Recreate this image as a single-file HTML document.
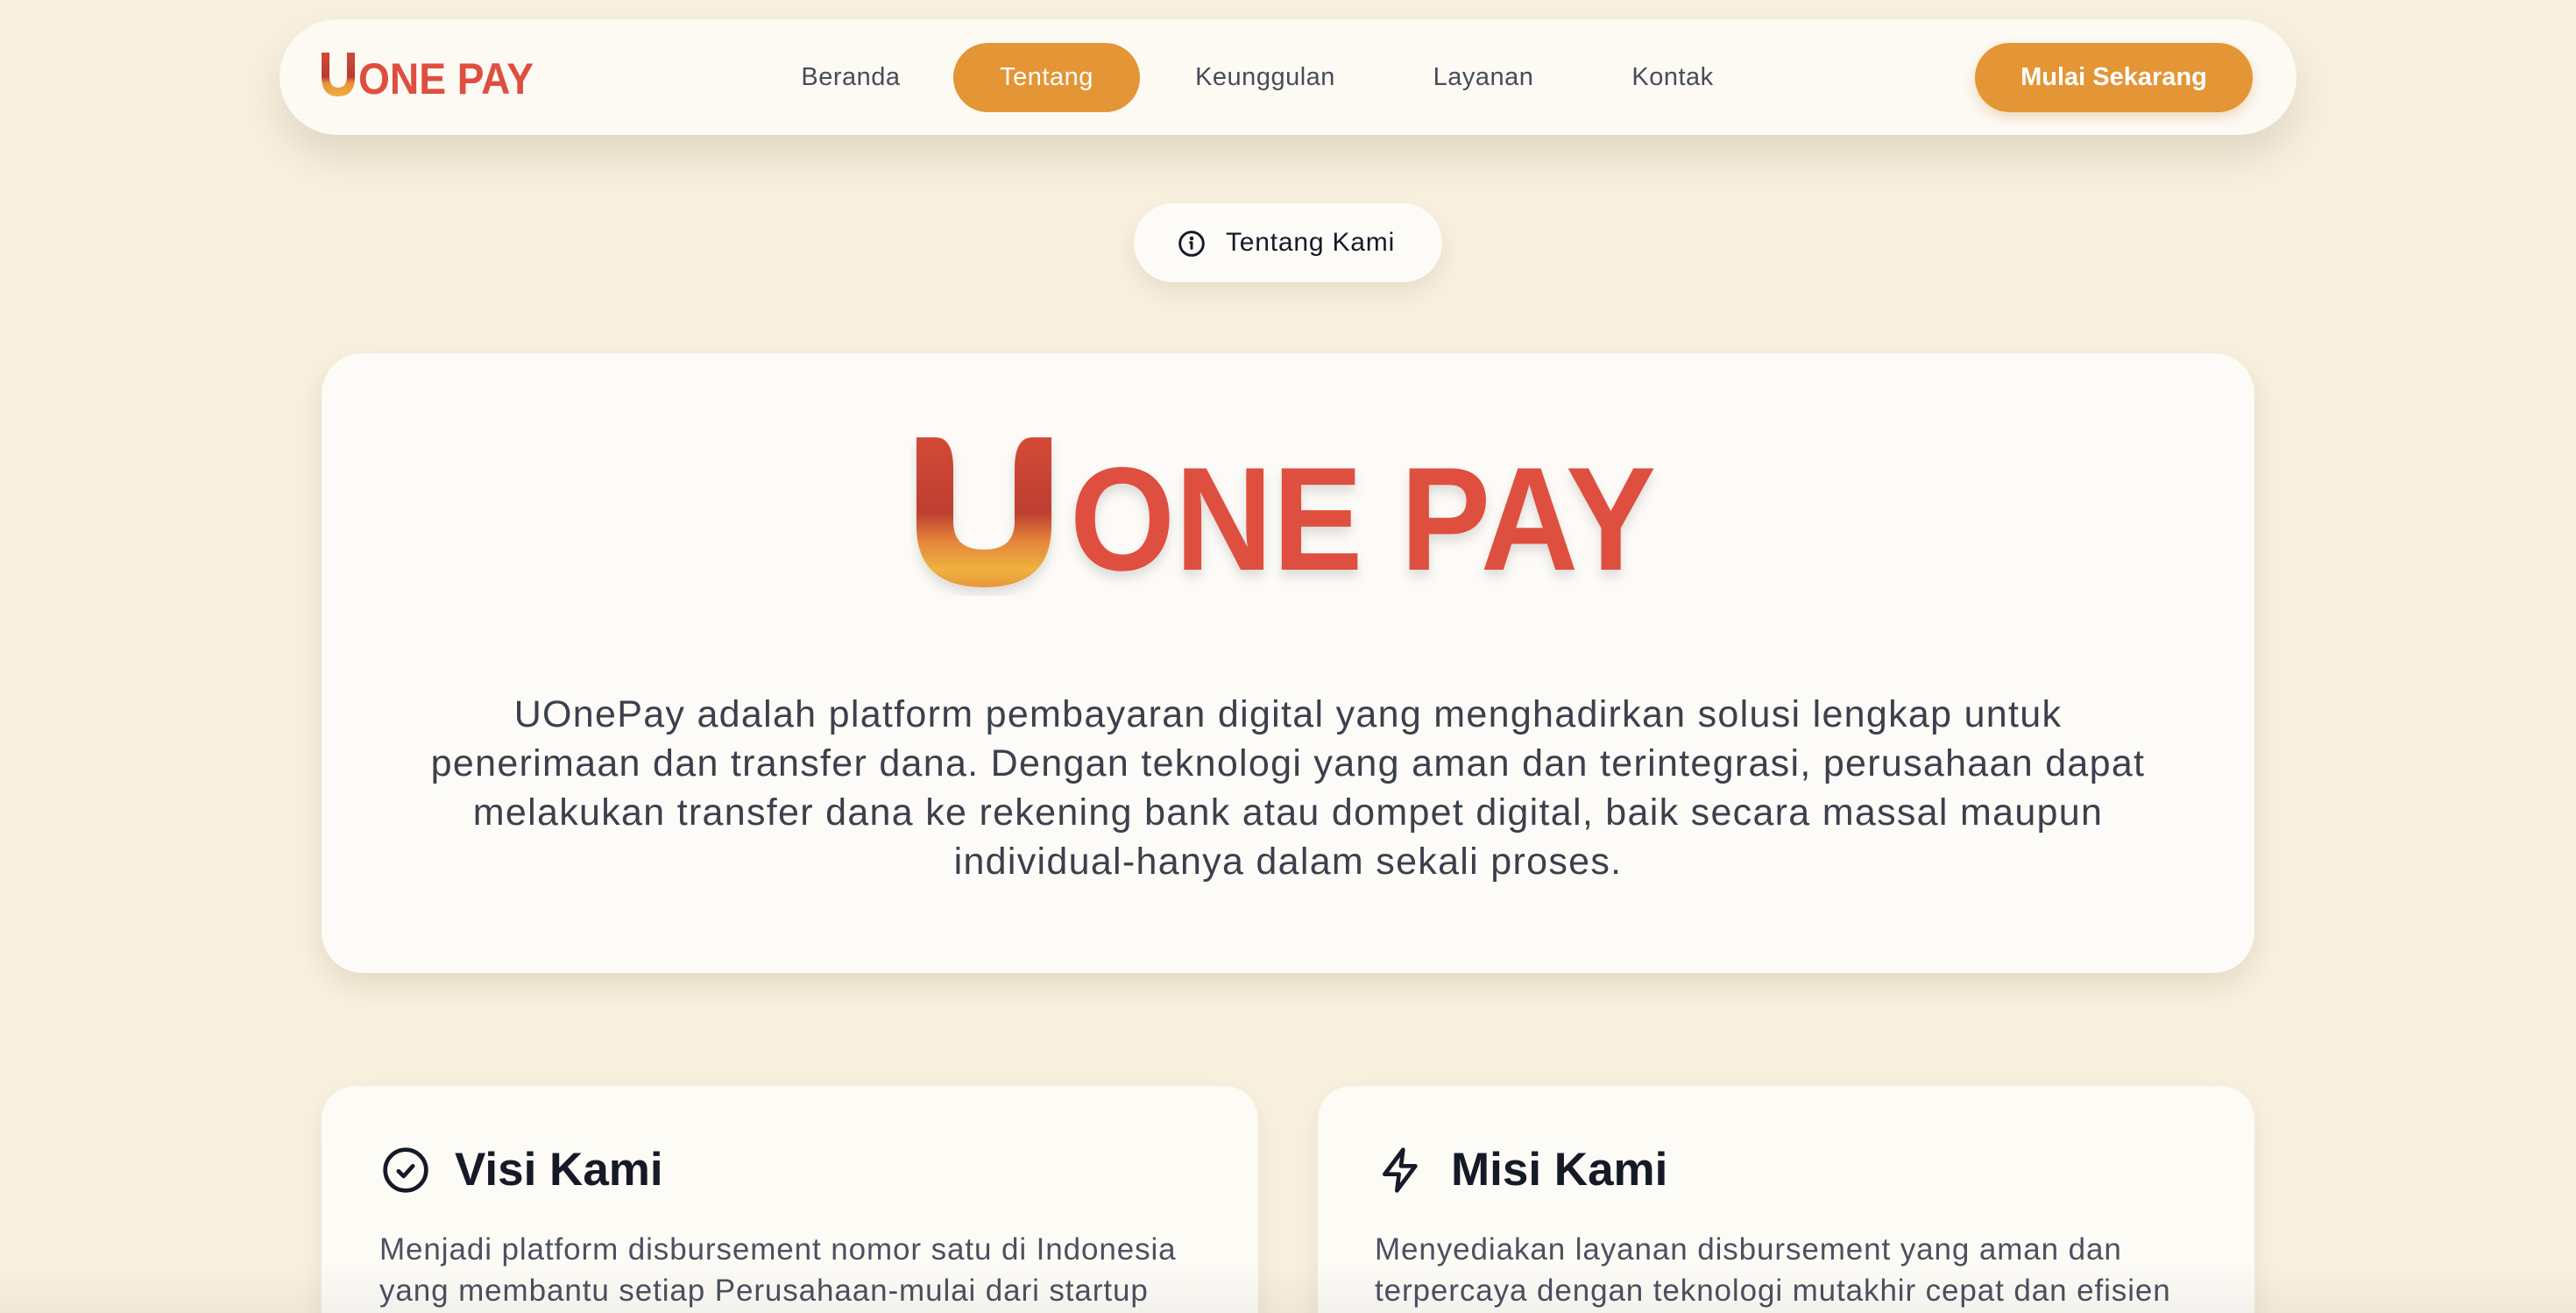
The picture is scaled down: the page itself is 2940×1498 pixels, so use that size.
<!DOCTYPE html>
<html><head><meta charset="utf-8">
<style>
*{margin:0;padding:0;box-sizing:border-box}
html,body{width:2940px;height:1498px;overflow:hidden;background:#f9f1e0;font-family:"Liberation Sans",sans-serif}
#wrap{position:relative;width:2940px;height:1498px;overflow:hidden}
.nav{position:absolute;left:319px;top:22px;width:2302px;height:132px;border-radius:66px;background:#fdfaf4;box-shadow:0 24px 50px rgba(90,70,30,.16)}
.link{position:absolute;top:49px;height:79px;line-height:79px;font-size:29px;color:#474c58;transform:translateX(-50%);white-space:nowrap;letter-spacing:.5px}
.pill{position:absolute;left:1088px;top:49px;width:213px;height:79px;border-radius:40px;background:#e49535;color:#fff;font-size:29px;line-height:79px;text-align:center;letter-spacing:.5px}
.btn{position:absolute;left:2254px;top:49px;width:317px;height:79px;border-radius:40px;background:#e49535;color:#fff;font-size:29px;font-weight:bold;line-height:79px;text-align:center;box-shadow:0 6px 14px rgba(200,120,30,.25)}
.tag{position:absolute;left:1294px;top:232px;width:352px;height:90px;border-radius:45px;background:#fdfbf7;box-shadow:0 12px 30px rgba(90,70,30,.12)}
.card{position:absolute;left:367px;top:403px;width:2206px;height:707px;border-radius:47px;background:#fdfbf7;box-shadow:0 14px 36px rgba(90,70,30,.14)}
.para{position:absolute;left:367px;top:787px;width:2206px;text-align:center;font-size:43px;line-height:56px;color:#3b404c;letter-spacing:1.3px}
.sc{position:absolute;top:1239px;width:1069px;height:300px;border-radius:38px;background:#fdfbf6;box-shadow:0 10px 30px rgba(90,70,30,.10)}
.st{position:absolute;top:1303px;font-size:53px;font-weight:bold;color:#161a27;line-height:64px}
.sb{position:absolute;top:1402px;font-size:35px;line-height:47px;color:#4b5160;white-space:nowrap;letter-spacing:.9px}
</style></head><body><div id="wrap">
<div class="nav"></div>
<svg style="position:absolute;left:365px;top:56px" width="250" height="56" viewBox="0 0 250 56">
<defs><linearGradient id="g1" x1="0" y1="0" x2="0" y2="1"><stop offset="0" stop-color="#d24a36"/><stop offset=".55" stop-color="#b93b30"/><stop offset=".7" stop-color="#e8913a"/><stop offset="1" stop-color="#eeae3e"/></linearGradient></defs>
<path d="M2 4 H11 V30 Q11 44 21 44 Q31 44 31 30 V4 H40 V32 Q40 54 21 54 Q2 54 2 32 Z" fill="url(#g1)"/>
<text x="44" y="51" font-family="Liberation Sans" font-weight="bold" font-size="50" fill="#de4f40" textLength="200" lengthAdjust="spacingAndGlyphs">ONE PAY</text>
</svg>
<div class="link" style="left:971px">Beranda</div>
<div class="pill">Tentang</div>
<div class="link" style="left:1444px">Keunggulan</div>
<div class="link" style="left:1693px">Layanan</div>
<div class="link" style="left:1909px">Kontak</div>
<div class="btn">Mulai Sekarang</div>

<div class="tag">
<svg style="position:absolute;left:50px;top:30px" width="32" height="32" viewBox="0 0 24 24" fill="none" stroke="#161a27" stroke-width="2.2" stroke-linecap="round"><circle cx="12" cy="12" r="10"/><path d="M12 16v-5M11 11h1"/><circle cx="12" cy="7.5" r=".6" fill="#161a27"/></svg>
<div style="position:absolute;left:105px;top:0;line-height:90px;font-size:30px;color:#161a27;letter-spacing:.8px">Tentang Kami</div>
</div>

<div class="card"></div>
<svg style="position:absolute;left:1040px;top:495px" width="860" height="185" viewBox="0 0 860 185">
<defs><linearGradient id="g2" x1="0" y1="0" x2="0" y2="1"><stop offset="0" stop-color="#d44a37"/><stop offset=".5" stop-color="#bd3e31"/><stop offset=".7" stop-color="#e5883a"/><stop offset=".88" stop-color="#efb140"/><stop offset="1" stop-color="#e8953a"/></linearGradient>
<filter id="sh"><feDropShadow dx="0" dy="8" stdDeviation="6" flood-color="#000" flood-opacity=".12"/></filter></defs>
<g filter="url(#sh)">
<path d="M6 4 H28 Q48 4 48 40 V100 Q48 132 83 132 Q118 132 118 100 V40 Q118 4 138 4 H160 V105 Q160 175 83 175 Q6 175 6 105 Z" fill="url(#g2)"/>
<text x="181" y="155" font-family="Liberation Sans" font-weight="bold" font-size="168" fill="#de4f40" textLength="669" lengthAdjust="spacingAndGlyphs">ONE PAY</text>
</g></svg>
<div class="para">UOnePay adalah platform pembayaran digital yang menghadirkan solusi lengkap untuk<br>penerimaan dan transfer dana. Dengan teknologi yang aman dan terintegrasi, perusahaan dapat<br>melakukan transfer dana ke rekening bank atau dompet digital, baik secara massal maupun<br>individual-hanya dalam sekali proses.</div>

<div class="sc" style="left:367px"></div>
<div class="sc" style="left:1504px"></div>
<svg style="position:absolute;left:435px;top:1307px" width="56" height="56" viewBox="0 0 24 24" fill="none" stroke="#161a27" stroke-width="2" stroke-linecap="round" stroke-linejoin="round"><circle cx="12" cy="12" r="10"/><path d="M8.5 12.5l2.5 2.5 4.5-5"/></svg>
<div class="st" style="left:519px">Visi Kami</div>
<svg style="position:absolute;left:1571px;top:1307px" width="56" height="56" viewBox="0 0 24 24" fill="none" stroke="#161a27" stroke-width="2" stroke-linejoin="round"><path d="M13 2L4 14h7l-1 8 9-12h-7z"/></svg>
<div class="st" style="left:1656px">Misi Kami</div>
<div class="sb" style="left:433px">Menjadi platform disbursement nomor satu di Indonesia<br>yang membantu setiap Perusahaan-mulai dari startup</div>
<div class="sb" style="left:1569px">Menyediakan layanan disbursement yang aman dan<br>terpercaya dengan teknologi mutakhir cepat dan efisien</div>
<div style="position:absolute;left:0;top:1440px;width:2940px;height:58px;background:linear-gradient(rgba(0,0,0,0),rgba(0,0,0,.04))"></div>
</div></body></html>
